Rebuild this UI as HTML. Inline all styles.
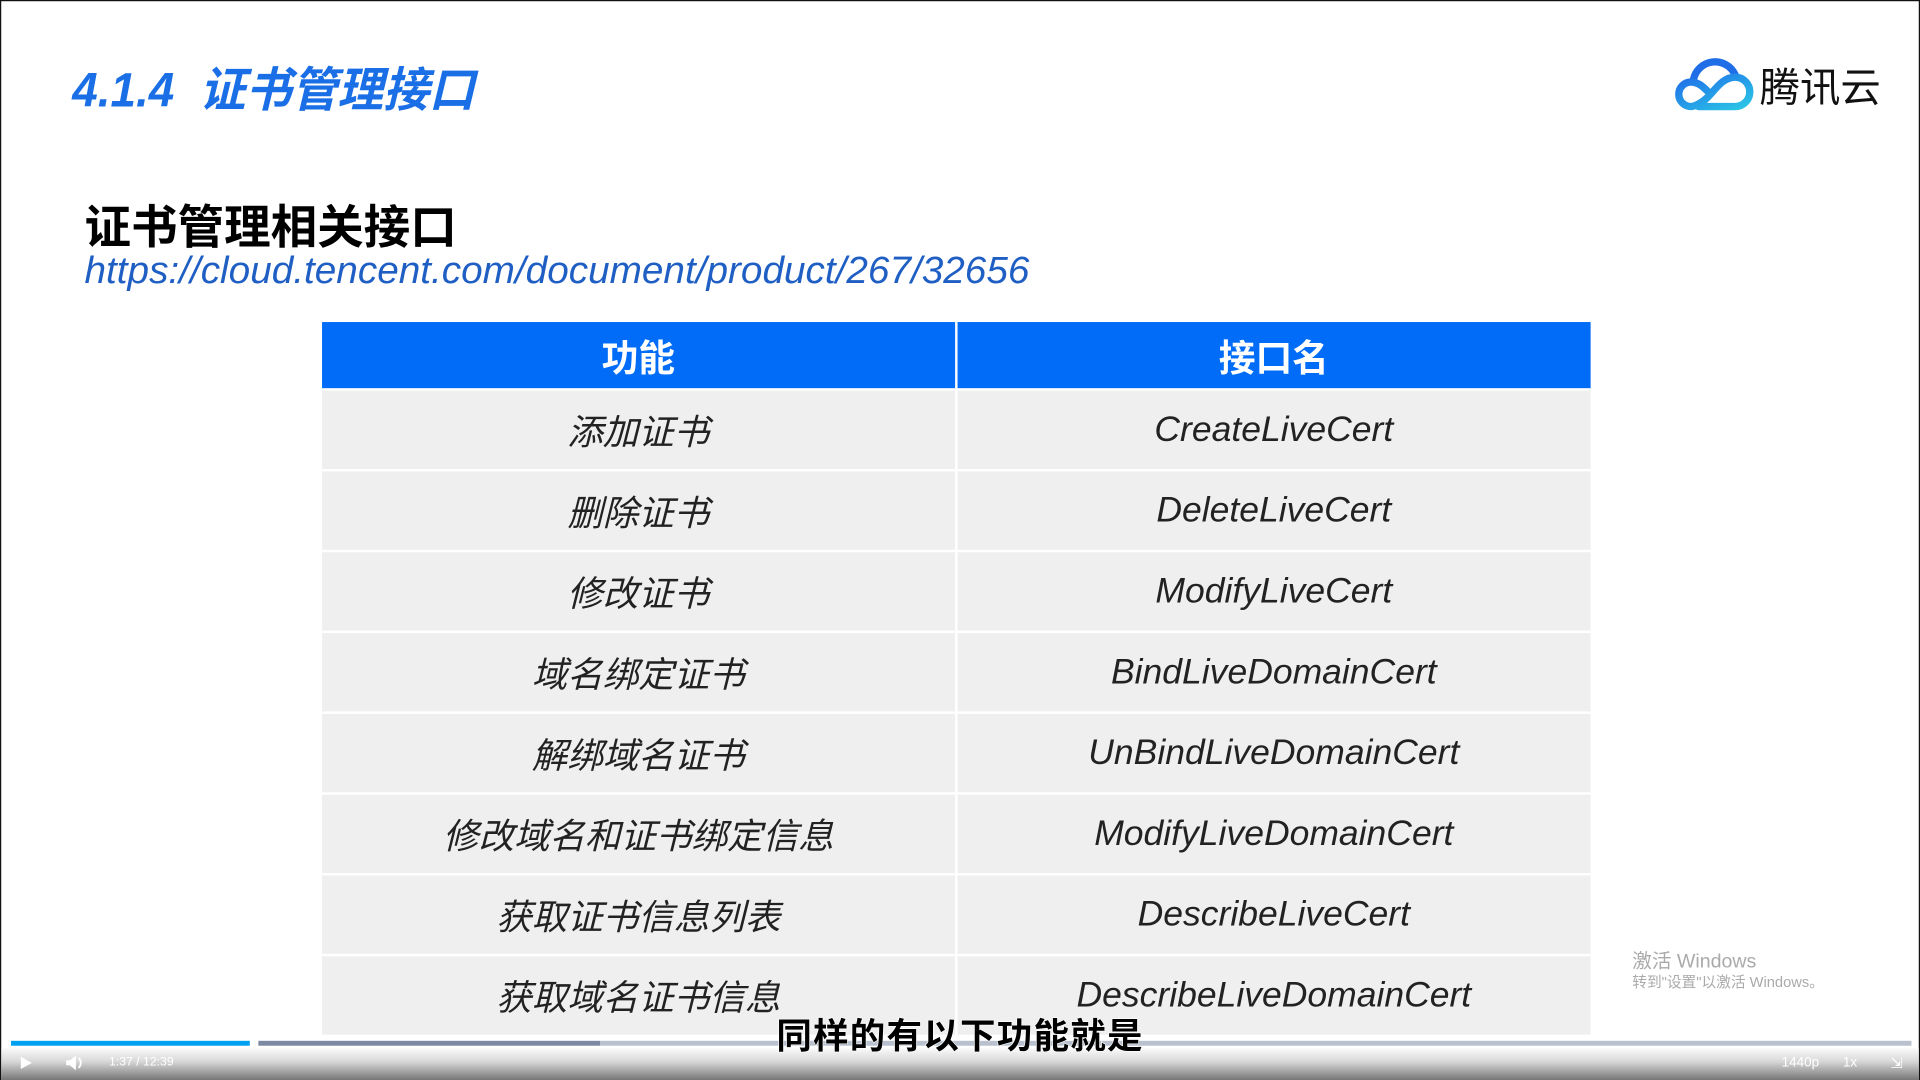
<!DOCTYPE html>
<html><head><meta charset="utf-8">
<style>
html,body{margin:0;padding:0;width:1920px;height:1080px;overflow:hidden;background:#fff}
#s{position:absolute;left:0;top:0;width:1568px;height:882px;transform:scale(1.22449);transform-origin:0 0;background:#fff;box-sizing:border-box;border:1px solid #111;border-bottom:none;font-family:"Liberation Sans","Noto Sans CJK SC",sans-serif;overflow:hidden}
.a{position:absolute;white-space:nowrap}
.t1{left:58px;top:42px;font-size:39px;font-weight:bold;font-style:italic;color:#1a6fe6;transform:scaleX(.96);transform-origin:0 0}
.t2{left:68px;top:154px;font-size:38px;font-weight:bold;color:#000}
.url{left:68px;top:202px;font-size:31px;font-style:italic;color:#1f5fc4;transform:scaleX(1.02);transform-origin:0 0}
table{position:absolute;left:262px;top:262px;width:1036px;border-collapse:collapse}
td,th{width:518px;text-align:center;font-style:italic;font-size:29px;color:#222;font-weight:normal;padding:0}
th{background:#006cf8;color:#fff;font-weight:bold;font-style:normal;height:54px;font-size:30px}
td{background:#efefef;height:64px;border-top:2px solid #fff}
td+td,th+th{border-left:2px solid #fff}
</style></head><body>
<div id="s">
<div class="a t1">4.1.4&nbsp; 证书管理接口</div>
<svg class="a" style="left:1366px;top:44px" width="68" height="50" viewBox="0 0 68 50">
<defs><linearGradient id="g" x1="0" y1="0" x2="1" y2="1"><stop offset="0" stop-color="#1f6ee8"/><stop offset="1" stop-color="#2bc6e6"/></linearGradient></defs>
<path d="M16 20 A18 18 0 0 1 50 16" fill="none" stroke="#1f6ee8" stroke-width="6" stroke-linecap="round"/>
<path d="M20 42 L50 42 A12 12 0 0 0 50 18 C40 18 34 28 28 34 C22 40 16 42 14 42 A10 10 0 0 1 14 22 C20 22 24 26 28 30" fill="none" stroke="url(#g)" stroke-width="6" stroke-linecap="round"/>
</svg>
<div class="a" style="left:1436px;top:44px;font-size:33px;color:#111">腾讯云</div>
<div class="a t2">证书管理相关接口</div>
<div class="a url">https://cloud.tencent.com/document/product/267/32656</div>
<table>
<tr><th>功能</th><th>接口名</th></tr>
<tr><td>添加证书</td><td>CreateLiveCert</td></tr>
<tr><td>删除证书</td><td>DeleteLiveCert</td></tr>
<tr><td>修改证书</td><td>ModifyLiveCert</td></tr>
<tr><td>域名绑定证书</td><td>BindLiveDomainCert</td></tr>
<tr><td>解绑域名证书</td><td>UnBindLiveDomainCert</td></tr>
<tr><td>修改域名和证书绑定信息</td><td>ModifyLiveDomainCert</td></tr>
<tr><td>获取证书信息列表</td><td>DescribeLiveCert</td></tr>
<tr><td>获取域名证书信息</td><td>DescribeLiveDomainCert</td></tr>
</table>
<div class="a" style="left:1332px;top:770px;font-size:16px;color:#aaa">激活 Windows</div>
<div class="a" style="left:1332px;top:792px;font-size:12px;color:#aaa">转到"设置"以激活 Windows。</div>
<div class="a" style="left:0;top:855px;width:1568px;height:27px;background:linear-gradient(#fafafa,#d8d8d8 40%,#707070)"></div>
<div class="a" style="left:8px;top:849px;width:195px;height:4px;background:#00a0f0"></div>
<div class="a" style="left:210px;top:849px;width:279px;height:4px;background:#7b89a2"></div>
<div class="a" style="left:489px;top:849px;width:1071px;height:4px;background:#b8c1cd"></div>
<div class="a" style="left:633px;top:822px;font-size:29px;font-weight:bold;letter-spacing:1px;color:#000;-webkit-text-stroke:1px #fff;paint-order:stroke fill">同样的有以下功能就是</div>
<svg class="a" style="left:14px;top:861px" width="12" height="12"><path d="M2 1 L11 6 L2 11Z" fill="#fff"/></svg>
<svg class="a" style="left:52px;top:860px" width="16" height="14"><path d="M1 5h3l5-4v12l-5-4H1z" fill="#fff"/><path d="M11 3a5 5 0 0 1 0 8" stroke="#fff" stroke-width="1.5" fill="none"/></svg>
<div class="a" style="left:88px;top:861px;font-size:10px;color:#fff">1:37 / 12:39</div>
<div class="a" style="left:1454px;top:861px;font-size:11px;color:#fff">1440p</div>
<div class="a" style="left:1504px;top:861px;font-size:11px;color:#fff">1x</div>
<div class="a" style="left:1543px;top:860px;font-size:12px;color:#fff">⇲</div>
</div>
</body></html>
